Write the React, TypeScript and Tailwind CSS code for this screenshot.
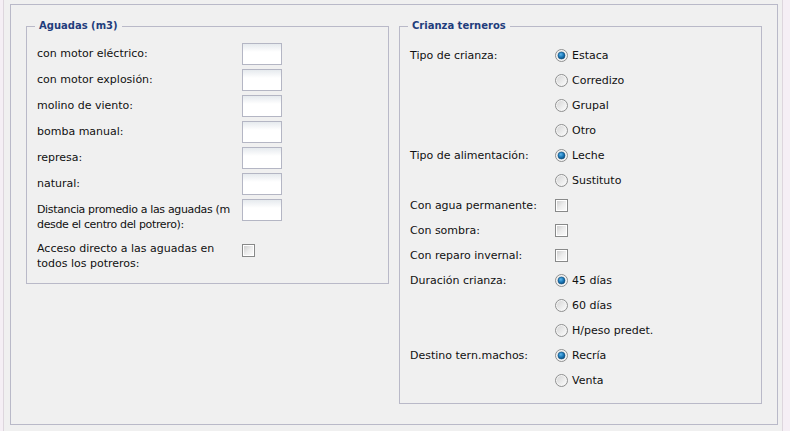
type FieldRow = { label: string; tight?: boolean };

const leftRows: FieldRow[] = [
  { label: "con motor eléctrico:" },
  { label: "con motor explosión:" },
  { label: "molino de viento:" },
  { label: "bomba manual:" },
  { label: "represa:" },
  { label: "natural:" },
  { label: "Distancia promedio a las aguadas (m desde el centro del potrero):", tight: true },
];

type RightRow =
  | { label?: string; kind: "radio"; text: string; checked?: boolean }
  | { label: string; kind: "check" };

const rightRows: RightRow[] = [
  { label: "Tipo de crianza:", kind: "radio", text: "Estaca", checked: true },
  { kind: "radio", text: "Corredizo" },
  { kind: "radio", text: "Grupal" },
  { kind: "radio", text: "Otro" },
  { label: "Tipo de alimentación:", kind: "radio", text: "Leche", checked: true },
  { kind: "radio", text: "Sustituto" },
  { label: "Con agua permanente:", kind: "check" },
  { label: "Con sombra:", kind: "check" },
  { label: "Con reparo invernal:", kind: "check" },
  { label: "Duración crianza:", kind: "radio", text: "45 días", checked: true },
  { kind: "radio", text: "60 días" },
  { kind: "radio", text: "H/peso predet." },
  { label: "Destino tern.machos:", kind: "radio", text: "Recría", checked: true },
  { kind: "radio", text: "Venta" },
];

function TextBox() {
  return (
    <div className="w-[40px] h-[22px] shrink-0 border border-[#b4b6c4] bg-linear-to-b from-[#e6eaee] via-white via-[40%] to-white" />
  );
}

function CheckBox() {
  return (
    <div className="w-[13px] h-[13px] shrink-0 border border-[#888989] bg-white p-[1px]">
      <div className="w-full h-full bg-linear-to-br from-[#cfcfcf] via-[#ececec] to-[#fafafa]" />
    </div>
  );
}

function Radio({ checked }: { checked?: boolean }) {
  return (
    <svg width="13" height="13" viewBox="0 0 13 13" className="shrink-0">
      <defs>
        <linearGradient id="rbg" x1="0" y1="0" x2="1" y2="1">
          <stop offset="0" stopColor="#d6d6d6" />
          <stop offset="1" stopColor="#fbfbfb" />
        </linearGradient>
        <radialGradient id="rdot" cx="0.4" cy="0.35" r="0.7">
          <stop offset="0" stopColor="#5fb6ec" />
          <stop offset="0.55" stopColor="#1a78b8" />
          <stop offset="1" stopColor="#0c4a7a" />
        </radialGradient>
      </defs>
      <circle cx="6.5" cy="6.5" r="6" fill="#f4f4f4" stroke="#8e8f8f" strokeWidth="1" />
      <circle cx="6.5" cy="6.5" r="4.5" fill="url(#rbg)" />
      {checked && <circle cx="6.5" cy="6.5" r="3.5" fill="url(#rdot)" stroke="#0d4d7e" strokeWidth="0.6" />}
    </svg>
  );
}

function Legend({ children }: { children: string }) {
  return (
    <span className="absolute -top-[8px] left-[8px] px-[4px] bg-[#f0f0f0] font-bold text-[10px] leading-[14px] text-[#1f3d7c]">
      {children}
    </span>
  );
}

export default function App() {
  return (
    <div className="flex w-[790px] h-[431px] bg-[#f0f0f0] font-['DejaVu_Sans',sans-serif] text-[11px] text-[#111]">
      <div className="w-[4px] h-full bg-[#f5eff5] border-r border-[#ddd6dd]" />
      <div className="flex-1 pl-[6px] pt-[4px]">
        <div className="w-[768px] h-[421px] border border-[#b9b9c8] flex gap-[10px] px-[15px]">
          <div className="relative mt-[21px] w-[363px] self-start border border-[#b9b9c8] pl-[10px] pt-[16px] pb-[12px]">
            <Legend>Aguadas (m3)</Legend>
            <div className="flex flex-col gap-[4px]">
              {leftRows.map((r) => (
                <div key={r.label} className="flex items-start">
                  <div
                    className={
                      r.tight
                        ? "w-[205px] pt-[3px] leading-[15px] tracking-[-0.35px]"
                        : "w-[205px] pt-[3px] leading-[15px]"
                    }
                  >
                    {r.label}
                  </div>
                  <TextBox />
                </div>
              ))}
              <div className="flex items-start mt-[2px]">
                <div className="w-[205px] pt-[3px] leading-[15px]">
                  Acceso directo a las aguadas en todos los potreros:
                </div>
                <div className="mt-[6px]">
                  <CheckBox />
                </div>
              </div>
            </div>
          </div>
          <div className="relative mt-[21px] w-[363px] self-start border border-[#b9b9c8] pl-[10px] pt-[16px] pb-[10px]">
            <Legend>Crianza terneros</Legend>
            {rightRows.map((r, i) => (
              <div key={i} className="flex items-center h-[25px]">
                <div className="w-[145px] leading-[15px] whitespace-nowrap">{r.label}</div>
                {r.kind === "radio" ? (
                  <div className="flex items-center gap-[4px]">
                    <Radio checked={r.checked} />
                    <span className="leading-[15px]">{r.text}</span>
                  </div>
                ) : (
                  <CheckBox />
                )}
              </div>
            ))}
          </div>
        </div>
      </div>
      <div className="w-[8px] h-full bg-[#f5eff5] border-l border-[#ddd6dd]" />
    </div>
  );
}
